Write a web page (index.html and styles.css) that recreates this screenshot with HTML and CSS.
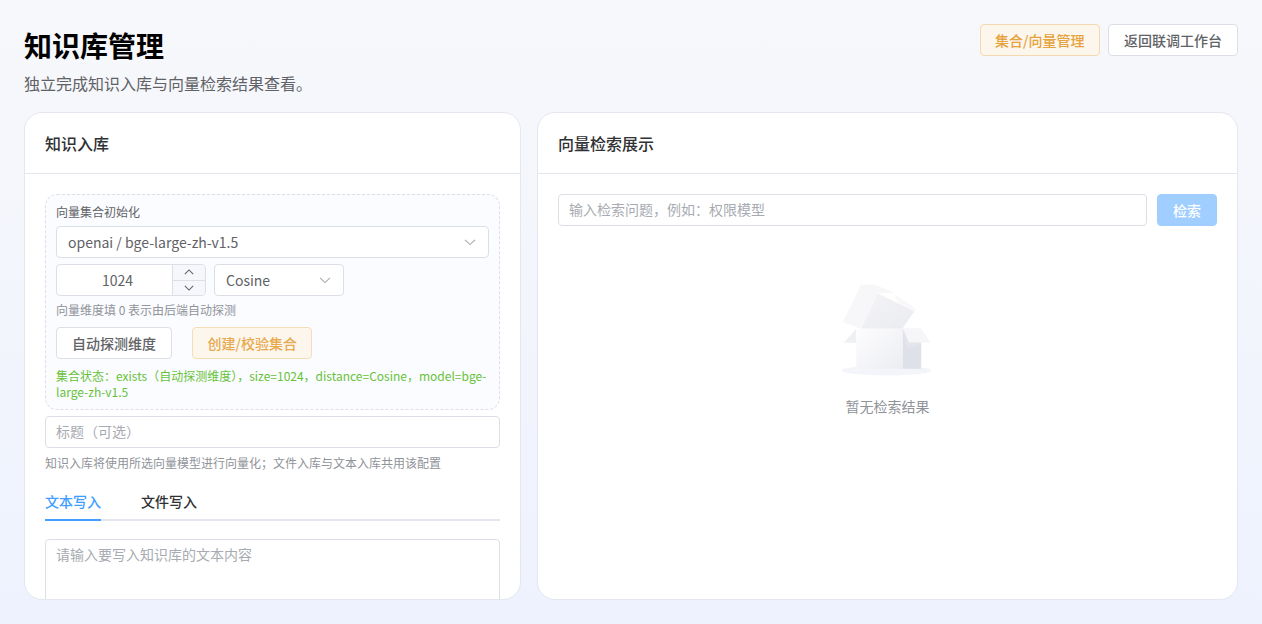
FILE: index.html
```html
<!DOCTYPE html>
<html lang="zh-CN">
<head>
    <meta charset="utf-8">
    <title>知识库管理</title>
    <link rel="stylesheet" href="styles.css">
</head>
<body>
    <div class="page">
        <header class="page-head">
            <div>
                <h1 class="page-title">知识库管理</h1>
                <p class="page-sub">独立完成知识入库与向量检索结果查看。</p>
            </div>
            <div class="head-actions">
                <button class="btn btn-warning">集合/向量管理</button>
                <button class="btn">返回联调工作台</button>
            </div>
        </header>

        <main class="panels">
            <section class="card">
                <div class="card-head">知识入库</div>
                <div class="card-body">
                    <div class="init-box">
                        <div class="init-label">向量集合初始化</div>
                        <div class="select select-full">
                            <span>openai / bge-large-zh-v1.5</span>
                            <svg class="chevron" viewBox="0 0 12 12"><path d="M1 3.8 6 8.6 11 3.8"/></svg>
                        </div>
                        <div class="dim-row">
                            <div class="number-input">
                                <span class="number-value">1024</span>
                                <div class="number-steps">
                                    <span class="step"><svg viewBox="0 0 12 12"><path d="M1 8.500 6 3.500 11 8.500"/></svg></span>
                                    <span class="step"><svg viewBox="0 0 12 12"><path d="M1 3.500 6 8.500 11 3.500"/></svg></span>
                                </div>
                            </div>
                            <div class="select select-metric">
                                <span>Cosine</span>
                                <svg class="chevron" viewBox="0 0 12 12"><path d="M1 3.8 6 8.6 11 3.8"/></svg>
                            </div>
                        </div>
                        <div class="hint">向量维度填 0 表示由后端自动探测</div>
                        <div class="init-actions">
                            <button class="btn btn-tall">自动探测维度</button>
                            <button class="btn btn-tall btn-warning btn-disabled">创建/校验集合</button>
                        </div>
                        <div class="status">集合状态：exists（自动探测维度），size=1024，distance=Cosine，model=bge-large-zh-v1.5</div>
                    </div>

                    <div class="input title-input">标题（可选）</div>
                    <div class="hint hint-form">知识入库将使用所选向量模型进行向量化；文件入库与文本入库共用该配置</div>

                    <div class="tabs">
                        <span class="tab tab-active">文本写入</span>
                        <span class="tab">文件写入</span>
                    </div>

                    <div class="textarea">请输入要写入知识库的文本内容</div>
                </div>
            </section>

            <section class="card">
                <div class="card-head">向量检索展示</div>
                <div class="card-body">
                    <div class="search-row">
                        <div class="input search-input">输入检索问题，例如：权限模型</div>
                        <button class="btn-search">检索</button>
                    </div>
                    <div class="empty">
                        <svg class="empty-pic" width="92" height="94" viewBox="1.500 0.500 92 94">
                            <defs>
                                <linearGradient id="lid" x1="0" y1="0" x2="1" y2="1">
                                    <stop offset="0" stop-color="#f4f4f7"/>
                                    <stop offset="1" stop-color="#eaebf0"/>
                                </linearGradient>
                                <linearGradient id="front" x1="0" y1="0" x2="1" y2="1">
                                    <stop offset="0" stop-color="#fdfdfe"/>
                                    <stop offset="1" stop-color="#ecedf2"/>
                                </linearGradient>
                            </defs>
                            <ellipse cx="46" cy="88" rx="45" ry="5" fill="#f4f5fa"/>
                            <path d="M15.700 46.300 3.300 60.300H15.700Z" fill="#eff0f4"/>
                            <path d="M2.300 39.700 20.700 2H34L54 10.300 37.300 11 20.700 46.300Z" fill="#f7f7fa"/>
                            <path d="M54 12 74 25.300 75.700 28.700 57 20Z" fill="#f8f8fa"/>
                            <path d="M37.300 11 74 28.700 61.700 46.300H20.700Z" fill="url(#lid)"/>
                            <path d="M15.700 46.300H62.300V86.300H15.700Z" fill="url(#front)"/>
                            <path d="M62.300 46.300H80.700V86.300H62.300Z" fill="#dfe1e9"/>
                            <path d="M62.300 46.300H80.700L90 60.300H68.300Z" fill="#f6f6f9"/>
                            <path d="M62.300 47 66.300 66.300 80.700 62V60.300H68.300Z" fill="#e4e5ec"/>
                        </svg>
                        <div class="empty-text">暂无检索结果</div>
                    </div>
                </div>
            </section>
        </main>
    </div>
</body>
</html>
```

FILE: styles.css
```css
* {
    box-sizing: border-box;
}

html, body {
    height: 100%;
}

body {
    margin: 0;
    font-family: "Noto Sans CJK SC", "Noto Sans", sans-serif;
    color: #303133;
    background: linear-gradient(180deg, #f7f8fb 0%, #eef2fe 100%);
    overflow: hidden;
}

.page {
    height: 100vh;
    padding: 24px;
    display: flex;
    flex-direction: column;
}

.page-head {
    display: flex;
    justify-content: space-between;
    align-items: flex-start;
    height: 88px;
    flex: none;
}

.page-title {
    margin: 0;
    font-size: 28px;
    line-height: 43px;
    font-weight: 700;
    color: #000;
}

.page-sub {
    margin: 4px 0 0;
    font-size: 16px;
    line-height: 24px;
    color: #606266;
}

.head-actions {
    display: flex;
    gap: 8px;
}

.btn {
    height: 32px;
    padding: 0 15px;
    font-family: inherit;
    font-size: 14px;
    font-weight: 500;
    color: #606266;
    background: #fff;
    border: 1px solid #dcdfe6;
    border-radius: 4px;
}

.btn-warning {
    padding: 0 14.5px;
    color: #e6a23c;
    background: #fdf6ec;
    border-color: #f5dab1;
}

.btn-tall {
    display: block;
}

.btn-disabled {
    opacity: 0.9;
}

.panels {
    flex: 1;
    min-height: 0;
    display: grid;
    grid-template-columns: 497px 701px;
    gap: 16px;
}

.card {
    background: #fff;
    border: 1px solid #e4e7ed;
    border-radius: 18px;
    overflow: hidden;
    display: flex;
    flex-direction: column;
}

.card-head {
    flex: none;
    height: 61px;
    padding: 0 20px;
    font-size: 16px;
    font-weight: 500;
    line-height: 61px;
    border-bottom: 1px solid #e4e7ed;
}

.card-body {
    flex: 1;
    min-height: 0;
    padding: 20px;
}

.init-box {
    padding: 9px 10px;
    height: 216px;
    background: #fbfcff;
    border: 1px dashed #dcdfe6;
    border-radius: 12px;
}

.init-label {
    font-size: 12px;
    line-height: 16px;
    color: #606266;
}

.select,
.number-input,
.input,
.textarea {
    background: #fff;
    border: 1px solid #dcdfe6;
    border-radius: 4px;
}

.select {
    height: 32px;
    display: flex;
    align-items: center;
    justify-content: space-between;
    font-size: 14px;
    color: #606266;
}

.select-full {
    margin-top: 6px;
    padding: 0 12px 0 11px;
}

.chevron {
    width: 12px;
    height: 12px;
    fill: none;
    stroke: #a8abb2;
    stroke-width: 1.1;
}

.dim-row {
    display: flex;
    gap: 8px;
    margin-top: 6px;
}

.number-input {
    width: 150px;
    height: 32px;
    display: flex;
    overflow: hidden;
}

.number-value {
    flex: 1;
    padding-left: 6px;
    text-align: center;
    font-size: 14px;
    line-height: 30px;
    color: #606266;
}

.number-steps {
    width: 33px;
    display: flex;
    flex-direction: column;
    background: #f5f7fa;
    border-left: 1px solid #dcdfe6;
}

.step {
    flex: 1;
    display: flex;
    align-items: center;
    justify-content: center;
}

.step + .step {
    border-top: 1px solid #dcdfe6;
}

.step svg {
    width: 10px;
    height: 10px;
    fill: none;
    stroke: #606266;
    stroke-width: 1.3;
}

.select-metric {
    width: 130px;
    padding: 0 12px 0 11px;
}

.hint {
    font-size: 12px;
    line-height: 18px;
    color: #909399;
}

.dim-row + .hint {
    margin-top: 5px;
}

.init-actions {
    display: flex;
    gap: 20px;
    margin-top: 8px;
}

.status {
    margin-top: 9px;
    font-size: 12px;
    line-height: 16px;
    color: #67c23a;
}

.input {
    height: 32px;
    padding: 0 10px;
    font-size: 14px;
    line-height: 28px;
    color: #a8abb2;
}

.title-input {
    margin-top: 6px;
}

.hint-form {
    margin-top: 6px;
}

.tabs {
    display: flex;
    gap: 40px;
    height: 40px;
    margin-top: 9px;
    border-bottom: 2px solid #e4e7ed;
}

.tab {
    height: 40px;
    font-size: 14px;
    font-weight: 500;
    line-height: 40px;
    color: #303133;
}

.tab-active {
    color: #409eff;
    border-bottom: 2px solid #409eff;
}

.textarea {
    margin-top: 18px;
    height: 120px;
    padding: 3px 10px;
    font-size: 14px;
    line-height: 22px;
    color: #a8abb2;
}

.search-row {
    display: flex;
    gap: 10px;
}

.search-input {
    flex: 1;
}

.btn-search {
    width: 60px;
    height: 32px;
    padding: 0;
    font-family: inherit;
    font-size: 14px;
    font-weight: 500;
    color: #fff;
    background: #a0cfff;
    border: 1px solid #a0cfff;
    border-radius: 4px;
}

.empty {
    display: flex;
    flex-direction: column;
    align-items: center;
    padding-top: 57px;
}

.empty-pic {
    display: block;
}

.empty-text {
    margin-top: 18px;
    font-size: 14px;
    line-height: 22px;
    color: #909399;
}
```
